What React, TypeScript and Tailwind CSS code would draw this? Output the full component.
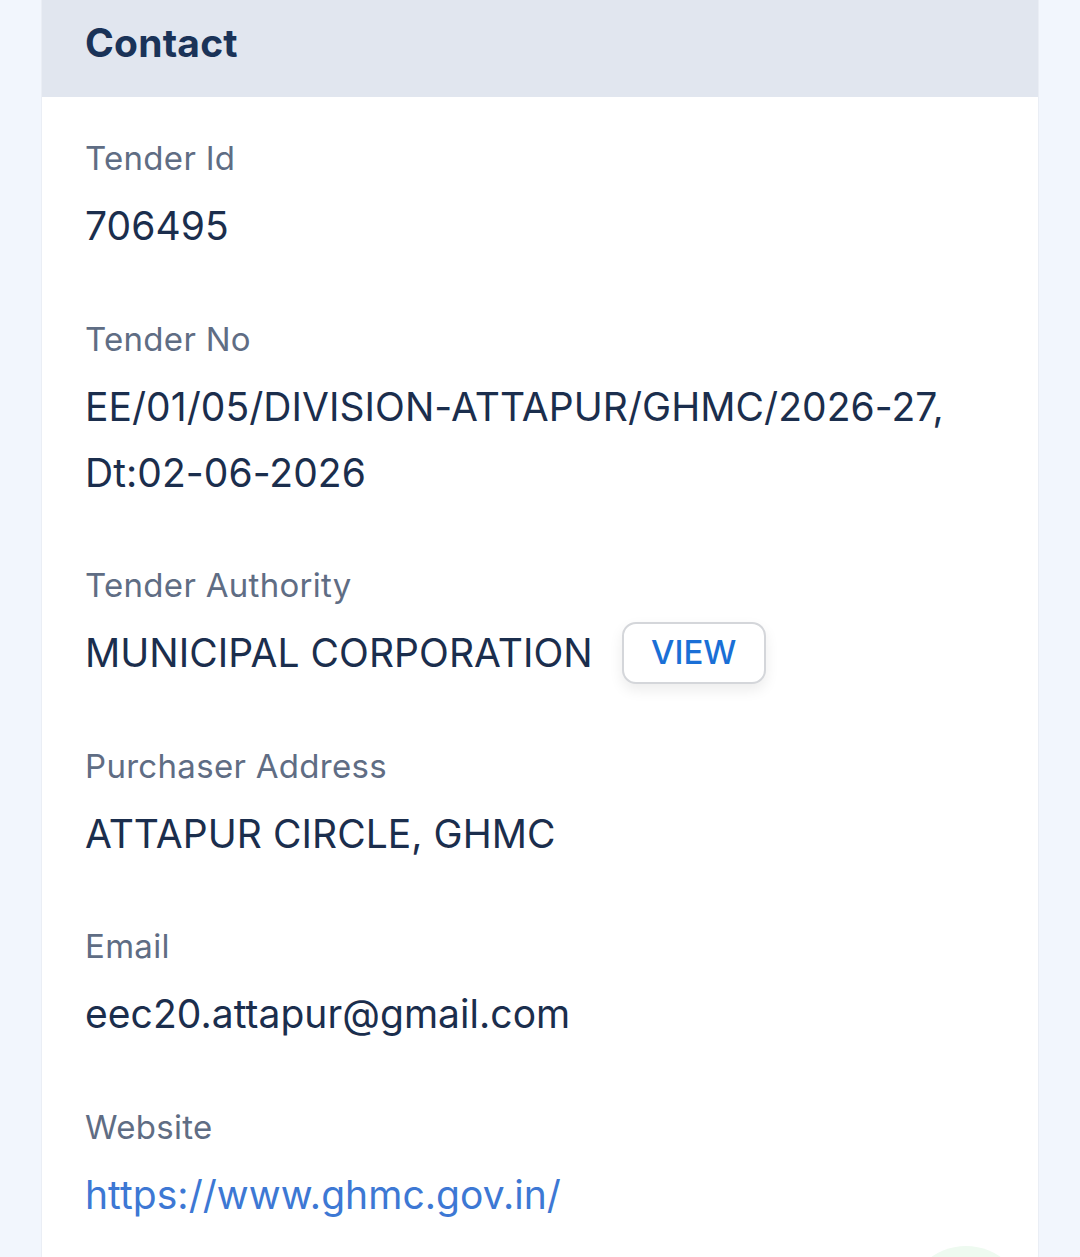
const rows: { label: string; value: string[]; link?: boolean; view?: boolean }[] = [
  { label: 'Tender Id', value: ['706495'] },
  { label: 'Tender No', value: ['EE/01/05/DIVISION-ATTAPUR/GHMC/2026-27,', 'Dt:02-06-2026'] },
  { label: 'Tender Authority', value: ['MUNICIPAL CORPORATION'], view: true },
  { label: 'Purchaser Address', value: ['ATTAPUR CIRCLE, GHMC'] },
  { label: 'Email', value: ['eec20.attapur@gmail.com'] },
  { label: 'Website', value: ['https://www.ghmc.gov.in/'], link: true },
]

export default function App() {
  return (
    <div
      className="relative min-h-[1257px] overflow-hidden bg-[#f2f6fd] px-[42px]"
      style={{ fontFamily: 'Inter, "Noto Sans", sans-serif' }}
    >
      <div className="rounded-b-[28px] bg-white shadow-[1px_0_0_#eaeef5,-1px_0_0_#eaeef5]">
        <div className="flex h-[97px] items-center bg-[#e1e6ef] px-[43px] pb-[10px]">
          <h2 className="text-[39px] font-bold tracking-[0.2px] text-[#1a3358]">Contact</h2>
        </div>

        <div className="flex flex-col gap-[56.5px] px-[43px] pt-[38px] pb-[56px]">
          {rows.map(({ label, value, link, view }) => (
            <div key={label}>
              <p className="text-[33px] leading-[46px] tracking-[0.3px] text-[#5f6d84]">{label}</p>
              <div className="mt-[12px] flex items-center gap-[29px]">
                <div>
                  {value.map(line => (
                    <p
                      key={line}
                      className={`text-[39px] leading-[66px] tracking-[0.05px] ${link ? 'text-[#3d78d4]' : 'text-[#1b2e4d]'}`}
                    >
                      {line}
                    </p>
                  ))}
                </div>
                {view && (
                  <button className="flex h-[62px] w-[144px] items-center justify-center rounded-[14px] border-2 border-[#d4d6da] bg-white text-[33px] font-medium text-[#1a6fd6] shadow-[0_6px_14px_rgba(0,0,0,0.08)]">
                    VIEW
                  </button>
                )}
              </div>
            </div>
          ))}
        </div>
      </div>

      <div className="absolute left-[906px] top-[1246px] h-[120px] w-[120px] rounded-full bg-[#eefaf0]" />
    </div>
  )
}
